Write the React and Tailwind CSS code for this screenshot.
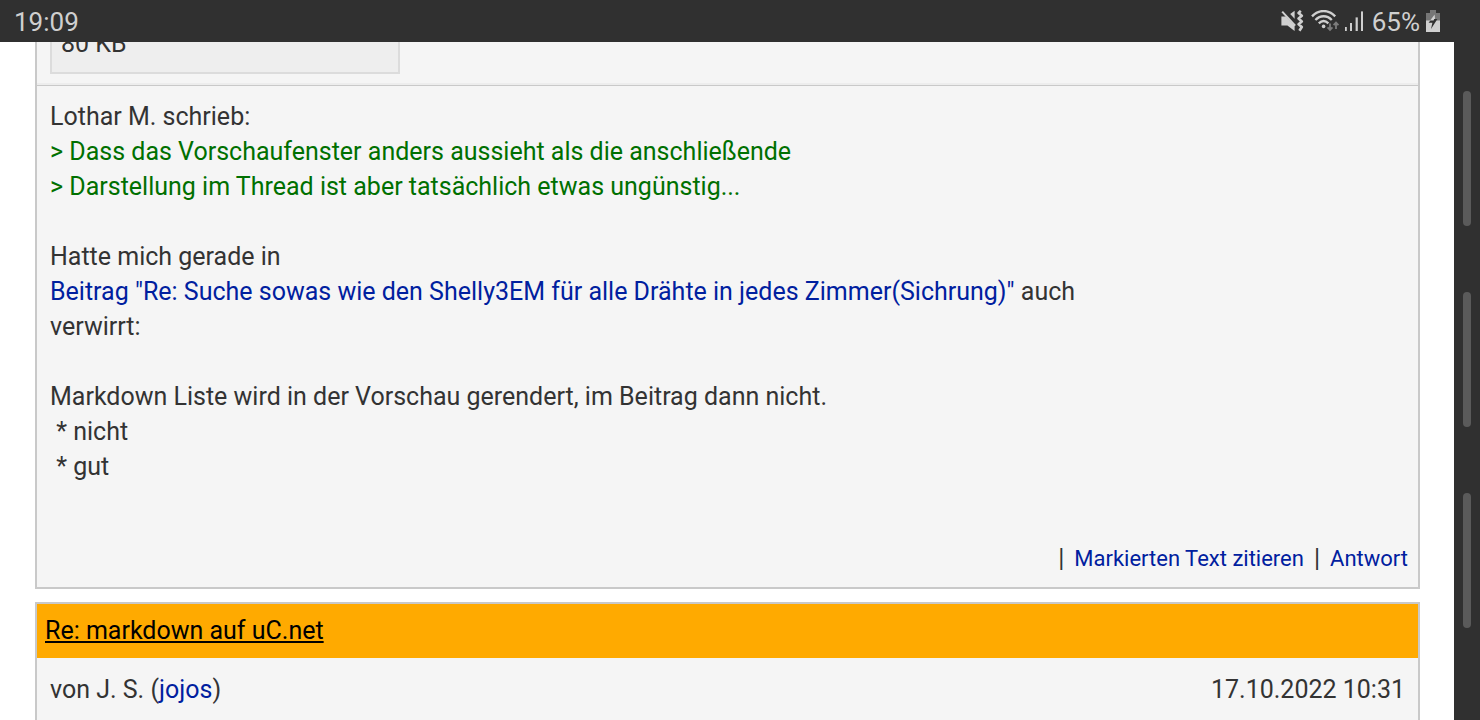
const QUOTE = [
  'Dass das Vorschaufenster anders aussieht als die anschließende',
  'Darstellung im Thread ist aber tatsächlich etwas ungünstig...',
];

const LIST_ITEMS = ['nicht', 'gut'];

const linkCls = 'text-[#00209f] hover:underline';

function MuteVibrateIcon() {
  return (
    <svg className="w-[23px] h-[22px]" viewBox="0 0 23 22" fill="none" aria-hidden="true">
      <path d="M0.4 6.6H5l8.6 9.2V21L6.4 15.4H0.4z" fill="#cfcfcf" />
      <path d="M9.2 4L13.6 0.8V8.8z" fill="#cfcfcf" />
      <path d="M1.2 1.6L14.2 15.6" stroke="#cfcfcf" strokeWidth="2" />
      <path
        d="M19.8 0.8L17.6 3l3.2 2.8L17.6 8.6l3.2 2.8-3.2 2.8 3.2 2.8-2.4 3.8"
        stroke="#cfcfcf"
        strokeWidth="2.6"
        strokeLinejoin="round"
      />
    </svg>
  );
}

function WifiIcon() {
  return (
    <svg className="w-[28px] h-[22px]" viewBox="0 0 28 22" fill="none" aria-hidden="true">
      <path d="M1 6.4C7.6 -0.8 17.6 -0.8 24.2 6.4" stroke="#cfcfcf" strokeWidth="2.3" />
      <path d="M4.4 10C9.2 5 16 5 20.8 10" stroke="#cfcfcf" strokeWidth="2.3" />
      <path d="M7.8 13.4C10.8 10.4 14.4 10.4 17.4 13.4" stroke="#cfcfcf" strokeWidth="2.3" />
      <circle cx="12.6" cy="16.4" r="1.8" fill="#cfcfcf" />
      <path d="M19 13.4V20M16.6 17.4L19 20l2.4-2.6M25 19V12.6M22.6 15.2L25 12.6l2.4 2.6" stroke="#7c7c7c" strokeWidth="1.8" />
    </svg>
  );
}

function SignalIcon() {
  return (
    <svg className="w-[18px] h-[22px]" viewBox="0 0 18 22" fill="#cfcfcf" aria-hidden="true">
      <rect x="0" y="17" width="1.8" height="4" />
      <rect x="5" y="13" width="2" height="8" />
      <rect x="10.6" y="7.4" width="2.2" height="13.6" />
      <rect x="16" y="1.4" width="2" height="19.6" />
    </svg>
  );
}

function BatteryIcon() {
  return (
    <svg className="w-[14px] h-[22px]" viewBox="0 0 14 22" aria-hidden="true">
      <path d="M4 0h6v3h4v8H0V3h4z" fill="#767676" />
      <path d="M0 10.5h14V22H0z" fill="#cfcfcf" />
      <path d="M8.6 4.4L2.6 12.6h3.6l3-2.1z" fill="#cfcfcf" />
      <path d="M2.6 12.8L4.4 10.6h3.2L8.2 9h3.2L5 19l1.4-6.2z" fill="#303030" />
    </svg>
  );
}

function StatusBar() {
  return (
    <header className="flex h-[42px] shrink-0 items-center justify-between bg-[#303030] pl-[14px] pr-10 text-[26px] text-[#cfcfcf]">
      <time className="pt-[2px]">19:09</time>
      <div className="flex items-center">
        <MuteVibrateIcon />
        <span className="ml-[7px]"><WifiIcon /></span>
        <span className="ml-[6px]"><SignalIcon /></span>
        <span className="ml-[9px] pt-[2px]">65%</span>
        <span className="ml-[6px]"><BatteryIcon /></span>
      </div>
    </header>
  );
}

function EdgeBars() {
  return (
    <aside className="flex w-[26px] shrink-0 flex-col items-center gap-[66px] bg-[#303030] pt-[49px]">
      {[1, 2, 3].map((n) => (
        <div key={n} className="h-[135px] w-2 shrink-0 rounded-full bg-[#5a5a5a]" />
      ))}
    </aside>
  );
}

export default function App() {
  return (
    <div className="flex h-screen flex-col overflow-hidden bg-white font-['Roboto',sans-serif] text-[25px] leading-[35px] text-[#333333]">
      <StatusBar />

      <div className="flex min-h-0 flex-1">
        <main className="flex min-w-0 flex-1 flex-col overflow-hidden pl-[35px] pr-[34px]">
          <article className="shrink-0 border-x-2 border-b-2 border-[#c9c9c9] bg-[#f5f5f5]">
            {/* attachment, scrolled mostly out of view */}
            <div className="border-b border-[#c9c9c9]">
              <div className="border-b-2 border-[#ededed] px-[13px] pb-[9px]">
                <div className="flex h-8 w-[350px] items-end overflow-hidden border-x-2 border-b-2 border-[#dcdcdc] bg-[#eeeeee] px-[9px] pb-[11px]">
                  80 KB
                </div>
              </div>
            </div>

            <div className="px-[13px] pt-[13px]">
              <p>Lothar M. schrieb:</p>
              <blockquote className="text-[#007000]">
                {QUOTE.map((line) => <p key={line}>&gt; {line}</p>)}
              </blockquote>

              <p className="mt-[35px]">
                Hatte mich gerade in<br />
                <a href="#beitrag" className={linkCls}>
                  Beitrag "Re: Suche sowas wie den Shelly3EM für alle Drähte in jedes Zimmer(Sichrung)"
                </a>{' '}
                auch<br />
                verwirrt:
              </p>

              <p className="mt-[35px]">Markdown Liste wird in der Vorschau gerendert, im Beitrag dann nicht.</p>
              {LIST_ITEMS.map((item) => (
                <p key={item} className="whitespace-pre"> * {item}</p>
              ))}
            </div>

            <div className="mt-[57px] flex items-center justify-end gap-[10px] px-[10px] pb-[11px]">
              <span>|</span>
              <a href="#zitieren" className={`text-[22px] ${linkCls}`}>Markierten Text zitieren</a>
              <span>|</span>
              <a href="#antwort" className={`text-[22px] ${linkCls}`}>Antwort</a>
            </div>
          </article>

          <article className="mt-[13px] flex-1 border-x-2 border-t-2 border-[#c9c9c9] bg-[#f5f5f5]">
            <h2 className="bg-[#ffaa00] px-2 pt-[9px] pb-[10px]">
              <a href="#markdown" className="text-black underline">Re: markdown auf uC.net</a>
            </h2>
            <div className="flex justify-between px-[13px] pt-[14px]">
              <span>von J. S. (<a href="#jojos" className={linkCls}>jojos</a>)</span>
              <time>17.10.2022 10:31</time>
            </div>
          </article>
        </main>

        <EdgeBars />
      </div>
    </div>
  );
}
